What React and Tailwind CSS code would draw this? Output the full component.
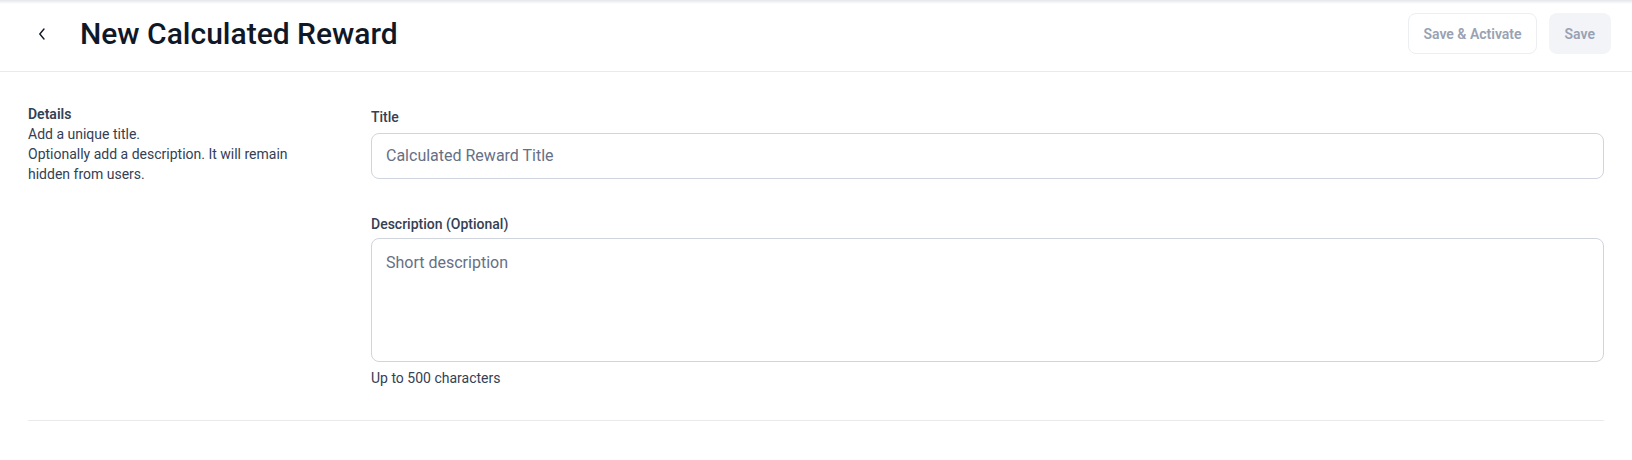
import React from "react";

export default function App() {
  return (
    <div className="min-h-[460px] w-full bg-white font-['Roboto',_'Liberation_Sans',_sans-serif]">
      <div className="h-[4px] bg-gradient-to-b from-[#e4e6ea] to-white" />
      <header className="flex h-[68px] items-center justify-between border-b border-[#e9eaee] pb-[8px] pl-[32px] pr-[21px]">
        <div className="flex items-center">
          <button className="flex h-5 w-5 items-center justify-center text-[#101828]">
            <svg width="10" height="12" viewBox="0 0 10 12" fill="none">
              <path d="M7 1L2.8 6L7 11" stroke="currentColor" strokeWidth="1.4" strokeLinecap="round" strokeLinejoin="round" />
            </svg>
          </button>
          <h1 className="ml-[28px] text-[30px] font-medium leading-9 tracking-[0px] text-[#101828]">
            New Calculated Reward
          </h1>
        </div>
        <div className="flex items-center gap-3">
          <button className="h-[41px] rounded-lg border border-[#eceef2] bg-white px-[14px] text-sm font-semibold text-[#98a2b3]">
            Save &amp; Activate
          </button>
          <button className="h-[41px] rounded-lg bg-[#f2f4f7] px-4 text-sm font-semibold text-[#98a2b3]">
            Save
          </button>
        </div>
      </header>
      <main className="px-[28px] pt-[32px]">
        <div className="flex border-b border-[#e9eaee] pb-8">
          <div className="w-[343px] shrink-0">
            <div className="max-w-[280px] text-sm leading-5 text-[#344054]">
              <p className="font-semibold">Details</p>
              <p>Add a unique title.</p>
              <p>Optionally add a description. It will remain hidden from users.</p>
            </div>
          </div>
          <div className="flex-1 pt-[3px]">
            <label className="mb-1.5 block text-sm font-medium leading-5 text-[#344054]">Title</label>
            <div className="flex h-[46px] items-center rounded-lg border border-[#d0d5dd] px-3.5">
              <span className="text-base leading-6 text-[#667085]">Calculated Reward Title</span>
            </div>
            <label className="mb-1 mt-[35px] block text-sm font-medium leading-5 text-[#344054]">Description (Optional)</label>
            <div className="h-[124px] rounded-lg border border-[#d0d5dd] px-3.5 py-3">
              <span className="text-base leading-6 text-[#667085]">Short description</span>
            </div>
            <p className="mt-1.5 text-sm leading-5 text-[#344054]">Up to 500 characters</p>
          </div>
        </div>
      </main>
    </div>
  );
}
